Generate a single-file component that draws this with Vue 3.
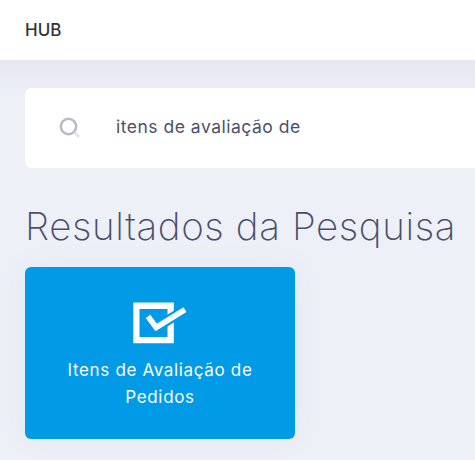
<script setup>
const query = 'itens de avaliação de'
const results = [{ id: 1, title: 'Itens de Avaliação de Pedidos' }]
</script>

<template>
  <div class="page">
    <header class="topbar">
      <span class="brand">HUB</span>
    </header>
    <main class="content">
      <div class="search">
        <svg class="search-icon" width="24" height="24" viewBox="0 0 24 24" fill="none">
          <circle cx="10.5" cy="10.5" r="7.7" stroke="#bbbac7" stroke-width="2.6" />
          <path d="M16.5 16.5 L21 21" stroke="#e3e3ea" stroke-width="2.6" />
        </svg>
        <span class="query">{{ query }}</span>
      </div>
      <h1 class="title">Resultados da Pesquisa</h1>
      <div class="cards">
        <a v-for="item in results" :key="item.id" class="card">
          <svg class="card-icon" width="56" height="42" viewBox="0 0 56 42" fill="none">
            <path d="M0.300 0.500h40.500v40.800H0.300z M6.500 7v28h28V7z" fill="#fff" fill-rule="evenodd" />
            <path d="M23.200 25.500 L52 7.700" stroke="#009ae6" stroke-width="10" />
            <path d="M15 14.300 L23.200 25.500 L52 7.700" stroke="#fff" stroke-width="5.600" />
          </svg>
          <span class="card-label">{{ item.title }}</span>
        </a>
      </div>
    </main>
  </div>
</template>

<style>
html,
body {
  margin: 0;
  overflow: hidden;
}
</style>

<style scoped>
.page {
  width: 475px;
  height: 460px;
  overflow: hidden;
  background: #eef0f8;
  font-family: Inter, "Open Sans", sans-serif;
}

.topbar {
  height: 60px;
  padding-left: 25px;
  display: flex;
  align-items: center;
  background: #fff;
}

.brand {
  font-size: 17px;
  font-weight: 500;
  color: #333;
}

.content {
  padding: 28px 0 0 25px;
  background: linear-gradient(#e6e7f1, #eef0f8 40px);
}

.search {
  width: 600px;
  height: 80px;
  display: flex;
  align-items: center;
  padding-left: 33px;
  background: #fff;
  border-radius: 6px;
}

.search-icon {
  flex: none;
}

.query {
  margin-left: 34px;
  margin-bottom: 3px;
  font-size: 17.500px;
  letter-spacing: 0.5px;
  color: #4c5068;
}

.title {
  margin: 37px 0 0;
  font-size: 38.500px;
  line-height: 42px;
  font-weight: 250;
  letter-spacing: 0.600px;
  white-space: nowrap;
  color: #4a4f68;
}

.cards {
  margin-top: 20px;
  display: flex;
}

.card {
  width: 270px;
  height: 172px;
  box-sizing: border-box;
  padding: 35px 30px 0;
  display: flex;
  flex-direction: column;
  align-items: center;
  background: #009ae6;
  border-radius: 6px;
  box-shadow: 0 0 30px rgba(80, 80, 130, 0.06);
}

.card-icon {
  margin-left: 2px;
}

.card-label {
  margin-top: 13px;
  font-size: 17px;
  line-height: 26.500px;
  letter-spacing: 0.660px;
  text-align: center;
  color: #fff;
}
</style>
